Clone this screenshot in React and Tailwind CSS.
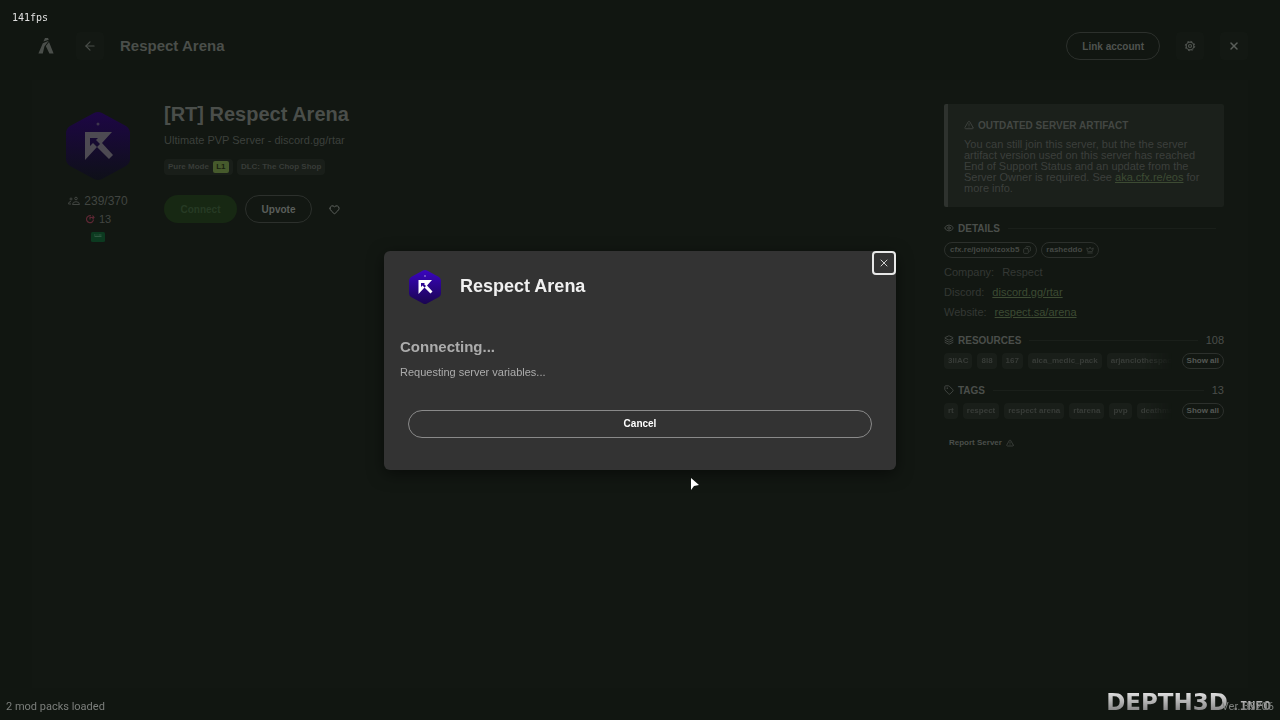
import React from "react";
import { ArrowLeft, Copy, Crown, Eye, Heart, Layers, Tag, TriangleAlert, X } from "lucide-react";

const RESOURCES = ["3llAC", "8l8", "167", "aica_medic_pack", "arjanclothespack"];
const TAGS = ["rt", "respect", "respect arena", "rtarena", "pvp", "deathmatch"];

const LINKS = [
  { label: "Discord:", text: "discord.gg/rtar", href: "#discord" },
  { label: "Website:", text: "respect.sa/arena", href: "#website" },
];

function CfxLogo() {
  return (
    <svg viewBox="0 0 16 18" className="h-[18px] w-4" fill="#4a4e4a">
      <path d="M5.400 4.600 7 1h3l.8 1.800z" />
      <path d="M4.800 6.200 10.800 3.800 6.400 9.600 4.800 16.600H.4z" />
      <path d="m7.800 9 3.200-4 4.600 11.600h-4.200z" />
    </svg>
  );
}

/**
 * Server icon: purple hexagon with the arrow-shaped R.
 */
function ServerLogo({ id, className, mark, top, bottom }) {
  return (
    <svg viewBox="0 0 68 72" className={className}>
      <defs>
        <linearGradient id={id} x1="0" y1="0" x2="0" y2="1">
          <stop offset="0" stopColor={top} />
          <stop offset="1" stopColor={bottom} />
        </linearGradient>
      </defs>
      <path
        d="M30 3q4-2 8 0l24 13q4 3 4 7v26q0 4-4 7L38 69q-4 2-8 0L6 56q-4-3-4-7V23q0-4 4-7z"
        fill={`url(#${id})`}
      />
      <circle cx="34" cy="14" r="1.5" fill={mark} opacity="0.7" />
      <path
        d="M21 22h27L38 33l11 12-4 4-12-12-12 13zM26 28h8l-2 2 4 4-3 3-4-4-3 3z"
        fill={mark}
        fillRule="evenodd"
      />
    </svg>
  );
}

function PlayersIcon() {
  return (
    <svg viewBox="0 0 12 10" className="h-[10px] w-3" fill="none" stroke="#414541">
      <circle cx="3" cy="3" r="1" />
      <circle cx="8" cy="2.500" r="1.300" />
      <path d="M.5 8q0-2.500 2.500-2.500M.5 8h2.500M4.500 8.500q0-2.800 3.500-2.800t3.500 2.800z" />
    </svg>
  );
}

function UpvotesIcon() {
  return (
    <svg viewBox="0 0 10 10" className="size-[10px]" fill="none" stroke="#5c2733" strokeWidth="1.2">
      <path d="M6 1.800A3.500 3.500 0 1 0 8.500 5.500" />
      <path d="M5 5.500V3.500h4M7.500 1.500l1.500 2-1.500 1.500" />
    </svg>
  );
}

function FlagIcon() {
  return (
    <svg viewBox="0 0 14 10" className="h-[10px] w-[14px]">
      <rect width="14" height="10" rx="1.5" fill="#0c3a20" />
      <path d="M3 3h1.500M5.500 3h1M7.500 3h3M3.500 4.500h7" stroke="#38604a" strokeWidth="0.8" />
    </svg>
  );
}

function GearIcon() {
  return (
    <svg viewBox="0 0 12 12" className="size-3" fill="none" stroke="#4f534f">
      <circle cx="6" cy="6" r="3.800" strokeWidth="1.200" />
      <circle cx="6" cy="6" r="1.500" strokeWidth="1.200" />
      <circle cx="6" cy="6" r="4.700" strokeWidth="1" strokeDasharray="1.800 1.890" />
    </svg>
  );
}

function Chip({ children }) {
  return (
    <span className="flex h-4 shrink-0 items-center rounded-sm bg-[#191e19] px-1 text-[8px] font-bold whitespace-nowrap text-[#383c38]">
      {children}
    </span>
  );
}

function SectionTitle({ icon: Icon, title, count }) {
  return (
    <div className="flex h-4 items-center">
      <Icon size={10} className="mr-1 shrink-0 text-[#4a4e4a]" />
      <h2 className="text-[10px] font-bold text-[#4a4e4a]">{title}</h2>
      <span className="mx-2 h-px flex-1 bg-[#1a1f1a]" />
      {count && <span className="text-[11px] text-[#4a4e4a]">{count}</span>}
    </div>
  );
}

function ChipList({ items }) {
  return (
    <div className="flex h-4 items-center justify-between">
      <div className="flex w-[228px] gap-[5px] overflow-hidden [mask-image:linear-gradient(to_right,black_88%,transparent)]">
        {items.map((item) => (
          <Chip key={item}>{item}</Chip>
        ))}
      </div>
      <button className="h-4 rounded-full border border-[#2c302c] px-1 text-[8px] leading-none font-bold text-[#555955]">
        Show all
      </button>
    </div>
  );
}

function Header() {
  return (
    <header className="flex h-20 items-center px-8 pt-3">
      <div className="flex w-7 justify-center">
        <CfxLogo />
      </div>
      <button aria-label="Back" className="ml-4 flex size-7 items-center justify-center rounded bg-[#131813]">
        <ArrowLeft size={14} className="text-[#4a4e4a]" />
      </button>
      <h1 className="ml-4 text-[15px] font-bold text-[#4a4e4a]">Respect Arena</h1>
      <button className="ml-auto h-7 rounded-full border border-[#2c302c] px-[15px] text-[10px] font-bold text-[#4f534f]">
        Link account
      </button>
      <button aria-label="Settings" className="ml-4 flex size-7 items-center justify-center rounded bg-[#131813]">
        <GearIcon />
      </button>
      <button aria-label="Close" className="ml-4 flex size-7 items-center justify-center rounded bg-[#131813]">
        <X size={12} strokeWidth={3} className="text-[#5a5e5a]" />
      </button>
    </header>
  );
}

function ServerInfo() {
  return (
    <section className="flex flex-1 gap-8">
      <div className="flex w-[68px] flex-col items-center pt-[6px]">
        <ServerLogo id="server-dim" className="h-[72px] w-[68px]" mark="#4d4a52" top="#1d0645" bottom="#0e1018" />
        <div className="mt-[10px] flex h-[18px] items-center gap-1 text-[12px] text-[#414541]">
          <PlayersIcon />
          239/370
        </div>
        <div className="flex h-[18px] items-center gap-1 text-[11px] text-[#414541]">
          <UpvotesIcon />
          13
        </div>
        <div className="flex h-[18px] items-center">
          <FlagIcon />
        </div>
      </div>

      <div>
        <h2 className="text-[20px] leading-5 font-bold text-[#4a4e4a]">[RT] Respect Arena</h2>
        <p className="mt-2 text-[11px] leading-4 text-[#3c403c]">Ultimate PVP Server - discord.gg/rtar</p>
        <div className="mt-[11px] flex gap-1">
          <Chip>
            Pure Mode
            <span className="ml-1 flex h-3 w-4 items-center justify-center rounded-xs bg-[#465a2c] text-[#182010]">L1</span>
          </Chip>
          <Chip>DLC: The Chop Shop</Chip>
        </div>
        <div className="mt-5 flex items-center gap-2">
          <button className="h-7 w-[73px] rounded-full bg-[#172813] text-[10px] font-bold text-[#263a24]">Connect</button>
          <button className="h-7 w-[67px] rounded-full border border-[#2c302c] text-[10px] font-bold text-[#5a5e5a]">
            Upvote
          </button>
          <button aria-label="Favorite" className="flex size-7 items-center justify-center">
            <Heart size={11} className="text-[#666a66]" />
          </button>
        </div>
      </div>
    </section>
  );
}

function Sidebar() {
  return (
    <aside className="w-[280px] text-[11px] text-[#343834]">
      <div className="rounded-xs border-l-4 border-[#2e322e] bg-[#1b201b] px-4 pt-[13px] pb-[13px]">
        <h2 className="flex h-4 items-center gap-1 text-[10px] font-bold text-[#434743]">
          <TriangleAlert size={10} />
          OUTDATED SERVER ARTIFACT
        </h2>
        <p className="mt-[6px] leading-[11px] text-[#3b3f3b]">
          You can still join this server, but the the server artifact version used on this server has reached End of
          Support Status and an update from the Server Owner is required. See{" "}
          <a href="#eos" className="text-[#3d4b33] underline">aka.cfx.re/eos</a> for more info.
        </p>
      </div>

      <div className="mt-[13px]">
        <SectionTitle icon={Eye} title="DETAILS" />
        <div className="mt-[6px] flex gap-1">
          <button className="flex h-4 items-center gap-1 rounded-full border border-[#2c302c] px-[5px] text-[8px] font-bold text-[#444844]">
            cfx.re/join/xlzoxb5 <Copy size={8} className="-scale-x-100" />
          </button>
          <button className="flex h-4 items-center gap-1 rounded-full border border-[#2c302c] px-1 text-[8px] font-bold text-[#444844]">
            rasheddo <Crown size={8} />
          </button>
        </div>
        <dl className="mt-1">
          <div className="flex h-5 items-center gap-2">
            <dt>Company:</dt>
            <dd>Respect</dd>
          </div>
          {LINKS.map((link) => (
            <div key={link.label} className="flex h-5 items-center gap-2">
              <dt>{link.label}</dt>
              <dd>
                <a href={link.href} className="text-[#3d4b33] underline">{link.text}</a>
              </dd>
            </div>
          ))}
        </dl>
      </div>

      <div className="mt-[10px] flex flex-col gap-[5px]">
        <SectionTitle icon={Layers} title="RESOURCES" count="108" />
        <ChipList items={RESOURCES} />
      </div>

      <div className="mt-[13px] flex flex-col gap-[5px]">
        <SectionTitle icon={Tag} title="TAGS" count="13" />
        <ChipList items={TAGS} />
      </div>

      <button className="mt-4 flex h-4 items-center gap-1 px-[5px] text-[8px] font-bold text-[#4a4e4a]">
        Report Server <TriangleAlert size={8} />
      </button>
    </aside>
  );
}

function ConnectingModal() {
  return (
    <div className="fixed inset-0 flex items-center justify-center">
      <div
        role="dialog"
        aria-label="Connecting to Respect Arena"
        className="relative w-full max-w-[512px] rounded-md bg-[#333333] px-4 pt-4 pb-8 shadow-[0_4px_16px_rgba(0,0,0,0.5)]"
      >
        <button
          aria-label="Close"
          className="absolute top-0 right-0 flex size-6 items-center justify-center rounded-sm border-2 border-[#e8e8e8] text-[#d0d0d0]"
        >
          <X size={12} />
        </button>

        <div className="flex h-10 items-center gap-[18px] pl-2">
          <ServerLogo id="server-modal" className="h-9 w-[34px]" mark="#ffffff" top="#3a05c0" bottom="#1a0550" />
          <h2 className="text-[18px] font-bold text-[#f0f0f0]">Respect Arena</h2>
        </div>
        <h3 className="mt-[30px] text-[15px] leading-5 font-bold text-[#acacac]">Connecting...</h3>
        <p className="mt-[7px] text-[11px] leading-4 text-[#acacac]">Requesting server variables...</p>
        <div className="mt-[30px] px-2">
          <button className="h-7 w-full rounded-full border border-[#8a8a8a] text-[10px] font-bold text-white">
            Cancel
          </button>
        </div>
      </div>
    </div>
  );
}

export default function App() {
  return (
    <div className="relative flex min-h-screen flex-col bg-[#111611] font-['Liberation_Sans',sans-serif]">
      <Header />
      <main className="mx-8 mb-8 flex flex-1 gap-8 bg-[#121712] pt-6 pr-6 pb-8 pl-8">
        <ServerInfo />
        <Sidebar />
      </main>

      <ConnectingModal />

      {/* Overlays drawn by the game on top of the menu */}
      <span className="absolute top-3 left-3 font-['DejaVu_Sans_Mono',monospace] text-[10px] leading-3 text-[#e0e0e0]">
        141fps
      </span>
      <span className="absolute bottom-[5px] left-[6px] font-['Roboto',sans-serif] text-[11px] leading-4 text-[#7c7f7c]">
        2 mod packs loaded
      </span>
      <div className="absolute right-[9px] bottom-[6px] flex items-end gap-1 bg-gradient-to-b from-[#eeeeee] to-[#777777] bg-clip-text text-transparent">
        <span className="font-['DejaVu_Sans',sans-serif] text-[23px] leading-6 font-bold">DEPTH3D</span>
        <span className="font-['DejaVu_Sans_Mono',monospace] text-[13px] leading-4 font-bold">.INFO</span>
      </div>
      <span className="absolute right-[6px] bottom-[5px] font-['Roboto',sans-serif] text-[11px] leading-4 text-[#7c7f7c]">
        Ver. 35206
      </span>
      <svg viewBox="0 0 10 14" className="absolute top-[477px] left-[690px] h-[14px] w-[10px]" fill="#ffffff">
        <path d="M1 1v12l3-4 5-1z" />
      </svg>
    </div>
  );
}
